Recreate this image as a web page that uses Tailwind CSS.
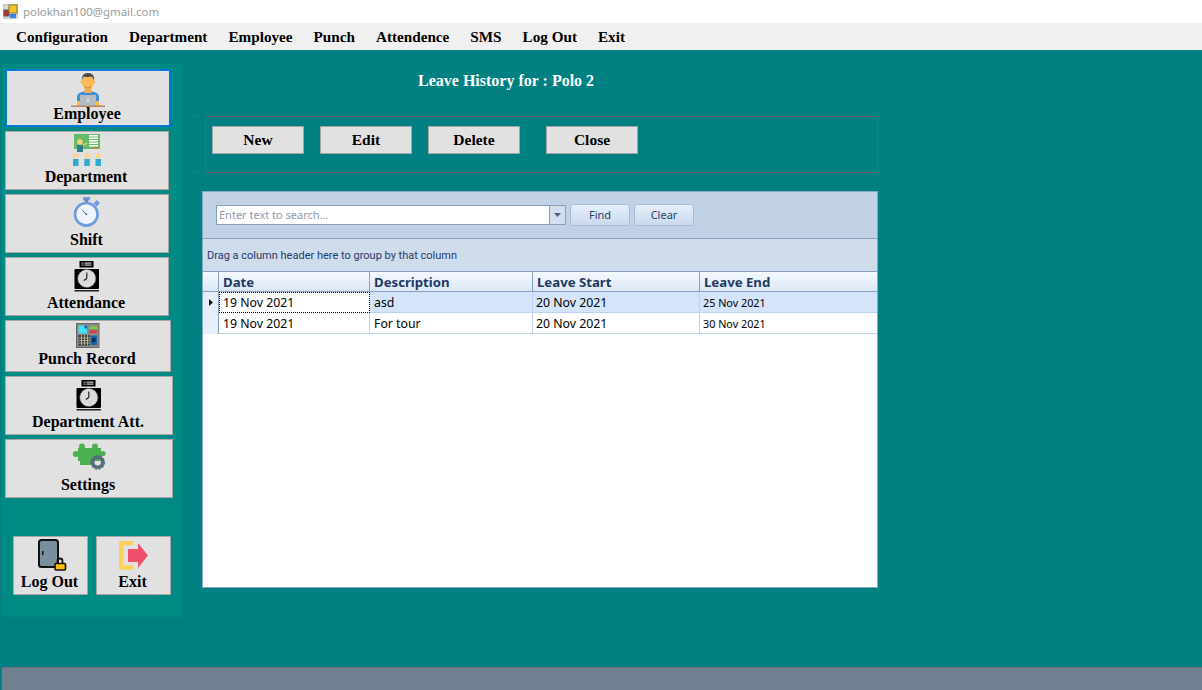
<!DOCTYPE html>
<html>
<head>
<meta charset="utf-8">
<script src="https://cdn.jsdelivr.net/npm/@tailwindcss/browser@4"></script>
</head>
<body class="m-0 h-[690px] w-[1202px] overflow-hidden bg-[#008080] flex flex-col font-['Liberation_Serif',serif] text-black">
<!-- title bar -->
<div class="h-[23px] bg-white flex items-center pl-[3px] shrink-0">
  <svg width="16" height="16" viewBox="3 3 16 16" class="mr-[4px]">
    <rect x="3.500" y="3.500" width="14" height="14" fill="#d8d8d8" stroke="#a8a8a8" stroke-width="0.500"/>
    <rect x="4" y="9" width="5" height="6" fill="#c8281e" stroke="#555" stroke-width="1"/>
    <rect x="9" y="4" width="8" height="8" fill="#f6c629" stroke="#8a7a30" stroke-width="1"/>
    <rect x="10" y="13" width="6" height="4" fill="#3f7fdc"/>
  </svg>
  <span class="font-['Noto_Sans',sans-serif] text-[11.4px] text-[#9c9c9c]">polokhan100@gmail.com</span>
</div>
<!-- menu -->
<div class="h-[27px] bg-[#f0f0f0] flex items-center pl-[16px] gap-[21px] shrink-0 text-[15.2px] font-bold leading-none pt-[1px]">
  <span>Configuration</span><span>Department</span><span>Employee</span><span>Punch</span><span>Attendence</span><span>SMS</span><span>Log Out</span><span>Exit</span>
</div>
<!-- main -->
<div class="flex-1 flex min-h-0">
  <!-- sidebar -->
  <div class="ml-[2px] mt-[14px] w-[181px] h-[553px] bg-[#008a84] pl-[3px] pt-[5px] shrink-0 flex flex-col text-[16px] font-bold leading-[18px]">
    <button class="w-[166px] h-[58px] bg-[#e1e1e1] border-2 border-[#0078d7] flex flex-col items-center">
      <svg width="34" height="35" viewBox="71 72 34 35" class="mt-[1px] block">
        <path d="M77 106v-9q0-4 5-5l3-1h6l3 1q5 1 5 5v9z" fill="#3f8fd2"/>
        <rect x="84.500" y="87" width="7" height="6" fill="#f5b04c"/>
        <circle cx="82" cy="82" r="1.500" fill="#f5b04c"/><circle cx="94" cy="82" r="1.500" fill="#f5b04c"/>
        <ellipse cx="88" cy="82.500" rx="6" ry="7" fill="#fbb957"/>
        <path d="M82 81q-1-8 6-8t6 8q-1-4-3-4.500q-4 1-7 0q-2 1-2 4.500z" fill="#4a4a4a"/>
        <path d="M85 87q3 2.500 6 0" stroke="#e0762a" fill="none"/>
        <rect x="77" y="101" width="3" height="5" fill="#fbb957"/><rect x="96" y="101" width="3" height="5" fill="#fbb957"/>
        <rect x="80" y="95" width="16" height="11" fill="#b4bcc4"/>
        <rect x="87" y="99.500" width="2" height="2" fill="#eef1f3"/>
        <rect x="71" y="105.500" width="34" height="1.500" fill="#b08a5c"/>
      </svg>
      <span class="mt-[-2px] mr-[2px]">Employee</span>
    </button>
    <button class="mt-[4px] w-[164px] h-[59px] bg-[#e1e1e1] border border-[#a6a6a6] flex flex-col items-center">
      <svg width="32" height="33" viewBox="71 134 32 33" class="block mt-[2px]">
        <rect x="74" y="134" width="26" height="15" fill="#66bb6a"/>
        <rect x="89" y="135" width="9" height="1.500" fill="#fff"/><rect x="89" y="137.500" width="9" height="1.500" fill="#fff"/><rect x="89" y="140" width="9" height="1.500" fill="#fff"/><rect x="89" y="142.500" width="9" height="1.500" fill="#fff"/><rect x="89" y="145" width="9" height="1.500" fill="#fff"/>
        <rect x="94" y="147" width="3.500" height="1.500" fill="#e0702c"/>
        <path d="M82 146l5-3" stroke="#ffd27a" stroke-width="1.200"/>
        <circle cx="80" cy="142" r="2.800" fill="#fbd17e"/>
        <rect x="77" y="145" width="6" height="7" fill="#2f7f86"/>
        <circle cx="75.700" cy="155.700" r="2.700" fill="#fbd68e"/><circle cx="87" cy="155.700" r="2.700" fill="#fbd68e"/><circle cx="98.300" cy="155.700" r="2.700" fill="#fbd68e"/>
        <rect x="73" y="159" width="5.500" height="7" fill="#2ea9cf"/><rect x="84.300" y="159" width="5.500" height="7" fill="#2ea9cf"/><rect x="95.500" y="159" width="5.500" height="7" fill="#2ea9cf"/>
      </svg>
      <span class="mt-[1px] mr-[2px]">Department</span>
    </button>
    <button class="mt-[4px] w-[164px] h-[59px] bg-[#e1e1e1] border border-[#a6a6a6] flex flex-col items-center">
      <svg width="28" height="31" viewBox="73 197 28 31" class="block mt-[2px]">
        <rect x="83" y="197" width="7" height="3.500" fill="#6f9bdc"/><rect x="85" y="199" width="3" height="4" fill="#5f8ccc"/>
        <rect x="94.500" y="201" width="4.500" height="4.500" fill="#6f9bdc" transform="rotate(45 96.700 203.300)"/>
        <circle cx="86.300" cy="214.300" r="11.300" fill="#eef4fc" stroke="#6f9bdc" stroke-width="2.600"/>
        <path d="M86.300 214.300l-4-4" stroke="#5a6a80" stroke-width="1"/><circle cx="86.300" cy="214.300" r="1" fill="#5a6a80"/>
      </svg>
      <span class="mt-[3px] mr-[1px]">Shift</span>
    </button>
    <button class="mt-[4px] w-[164px] h-[59px] bg-[#e1e1e1] border border-[#a6a6a6] flex flex-col items-center">
      <svg width="26" height="31" viewBox="74.500 261 26 31" class="block mt-[3px]">
        <rect x="80" y="261" width="14" height="6.500" fill="#000"/><rect x="82" y="262.500" width="2" height="1.200" fill="#aaa"/><rect x="85" y="262.500" width="7" height="1.200" fill="#ccc"/><rect x="82" y="264.500" width="2" height="1.200" fill="#aaa"/><rect x="85" y="264.500" width="7" height="1.200" fill="#ccc"/>
        <rect x="75" y="269" width="24.500" height="20" rx="1" fill="#000"/>
        <circle cx="87.300" cy="278.500" r="9" fill="#dcdcdc" stroke="#777" stroke-width="1" stroke-dasharray="1 1"/>
        <path d="M87.300 278.500v-6M87.300 278.500l-3 2" stroke="#111" stroke-width="1.100"/>
        <rect x="75" y="290" width="24.500" height="1.500" fill="#222"/>
      </svg>
      <span class="mt-[2px] mr-[2px]">Attendance</span>
    </button>
    <button class="mt-[4px] w-[166px] h-[52px] bg-[#e1e1e1] border border-[#a6a6a6] flex flex-col items-center">
      <svg width="24" height="25" viewBox="76.500 323.500 24 25" class="block mt-[2px]">
        <rect x="77" y="324" width="22.500" height="24" fill="#8a8a8a" stroke="#666" stroke-width="1"/>
        <rect x="79" y="326" width="8.500" height="8" fill="#41e3f6"/><path d="M85 326h2.500v3h-2.500z" fill="#1d5ea8"/>
        <rect x="90" y="327" width="7.500" height="2.500" fill="#7fd12f"/><rect x="90" y="331" width="7.500" height="2.500" fill="#e4373a"/>
        <rect x="79" y="335.500" width="11" height="10.500" fill="#3b3b30"/>
        <path d="M79 338.500h11M79 341h11M79 343.500h11M82 335.500v10.500M85 335.500v10.500M88 335.500v10.500" stroke="#c8c8a8" stroke-width="0.800"/>
        <rect x="91" y="336" width="6.500" height="9.500" fill="#1d5ea8"/><rect x="92.500" y="338.500" width="3.500" height="4" fill="#0d2a56"/>
      </svg>
      <span class="mt-[2px] mr-[2px]">Punch Record</span>
    </button>
    <button class="mt-[4px] w-[168px] h-[59px] bg-[#e1e1e1] border border-[#a6a6a6] flex flex-col items-center">
      <svg width="26" height="31" viewBox="76.500 380 26 31" class="block mt-[3px]">
        <rect x="82" y="380" width="14" height="6.500" fill="#000"/><rect x="84" y="381.500" width="2" height="1.200" fill="#aaa"/><rect x="87" y="381.500" width="7" height="1.200" fill="#ccc"/><rect x="84" y="383.500" width="2" height="1.200" fill="#aaa"/><rect x="87" y="383.500" width="7" height="1.200" fill="#ccc"/>
        <rect x="77" y="388" width="24.500" height="20" rx="1" fill="#000"/>
        <circle cx="89.300" cy="397.500" r="9" fill="#dcdcdc" stroke="#777" stroke-width="1" stroke-dasharray="1 1"/>
        <path d="M89.300 397.500v-6M89.300 397.500l-3 2" stroke="#111" stroke-width="1.100"/>
        <rect x="77" y="409" width="24.500" height="1.500" fill="#222"/>
      </svg>
      <span class="mt-[2px] mr-[2px]">Department Att.</span>
    </button>
    <button class="mt-[4px] w-[168px] h-[59px] bg-[#e1e1e1] border border-[#a6a6a6] flex flex-col items-center">
      <svg width="34" height="28" viewBox="72 444 34 28" class="block mt-[3px]">
        <g fill="#4caf50">
          <rect x="78" y="449" width="23" height="13"/>
          <rect x="80" y="461" width="12" height="5"/>
          <circle cx="82" cy="447.500" r="3"/><circle cx="95" cy="447.500" r="3"/>
          <circle cx="75.800" cy="455" r="3"/><circle cx="103" cy="454.500" r="2.600"/>
        </g>
        <circle cx="97.700" cy="463.300" r="5" fill="none" stroke="#546e7a" stroke-width="3.600"/>
        <circle cx="97.700" cy="463.300" r="6.800" fill="none" stroke="#546e7a" stroke-width="1.200" stroke-dasharray="2.200 1.600"/>
      </svg>
      <span class="mt-[5px] mr-[2px]">Settings</span>
    </button>
    <div class="mt-[38px] ml-[8px] flex gap-[8px]">
      <button class="w-[75px] h-[59px] bg-[#e1e1e1] border border-[#a6a6a6] flex flex-col items-center">
        <svg width="30" height="33" viewBox="37 538 30 33" class="block mt-[1px] ml-[3px]">
          <rect x="39" y="540" width="19" height="27" rx="2.500" fill="#78909c" stroke="#111" stroke-width="2"/>
          <rect x="42" y="551" width="1.500" height="4" fill="#111"/>
          <path d="M57.500 563v-2a2.500 2.500 0 0 1 5 0v2" fill="none" stroke="#111" stroke-width="1.800"/>
          <rect x="55" y="563.500" width="10.500" height="6.500" rx="1" fill="#ffc107" stroke="#111" stroke-width="1.600"/>
        </svg>
        <span class="mt-[2px] mr-[2px]">Log Out</span>
      </button>
      <button class="w-[75px] h-[59px] bg-[#e1e1e1] border border-[#a6a6a6] flex flex-col items-center">
        <svg width="30" height="29" viewBox="118 541 30 29" class="block mt-[4px]">
          <path d="M132 543h-12v24.500h12" fill="none" stroke="#fdd05a" stroke-width="4.500"/>
          <path d="M127 549h10v-6l10 12.500-10 12.500v-6h-10z" fill="#ef4f6c"/>
        </svg>
        <span class="mt-[3px] mr-[2px]">Exit</span>
      </button>
    </div>
  </div>
  <!-- content -->
  <div class="ml-[19px] flex-1 min-w-0">
    <div class="h-[66px] pt-[22px] pl-[216px] text-white font-bold text-[16px] leading-[18px] whitespace-pre">Leave History for : Polo 2</div>
    <div class="ml-[3px] w-[673px] h-[57px] border border-[#6e5f5f] pl-[6px] pt-[9px] flex text-[15.5px] font-bold leading-none">
      <button class="w-[92px] h-[28px] bg-[#e1e1e1] border border-[#a6a6a6]">New</button>
      <button class="ml-[16px] w-[92px] h-[28px] bg-[#e1e1e1] border border-[#a6a6a6]">Edit</button>
      <button class="ml-[16px] w-[92px] h-[28px] bg-[#e1e1e1] border border-[#a6a6a6]">Delete</button>
      <button class="ml-[26px] w-[92px] h-[28px] bg-[#e1e1e1] border border-[#a6a6a6]">Close</button>
    </div>
    <!-- grid -->
    <div class="mt-[18px] w-[676px] h-[397px] bg-white border border-[#8ba5c6] flex flex-col font-['Noto_Sans',sans-serif]">
      <div class="h-[47px] bg-[#c1d1e6] border-b border-[#87a0c0] flex items-center pl-[13px] shrink-0">
        <div class="w-[350px] h-[20px] bg-white border border-[#87a0c0] flex justify-between">
          <span class="pl-[2px] text-[11px] leading-[18px] text-[#8f99a8]">Enter text to search...</span>
          <span class="w-[16px] border-l border-[#87a0c0] bg-[#d3dfef] flex items-center justify-center">
            <svg width="7" height="4" viewBox="0 0 7 4"><path d="M0 0h7L3.500 4z" fill="#4f5f78"/></svg>
          </span>
        </div>
        <button class="ml-[4px] w-[60px] h-[22px] rounded-[3px] border border-[#a6bad6] bg-gradient-to-b from-[#e6effa] to-[#c9d9ed] text-[11px] text-[#2a3f66]">Find</button>
        <button class="ml-[4px] w-[60px] h-[22px] rounded-[3px] border border-[#a6bad6] bg-gradient-to-b from-[#e6effa] to-[#c9d9ed] text-[11px] text-[#2a3f66]">Clear</button>
      </div>
      <div class="h-[33px] bg-[#cfdcec] border-b border-[#87a0c0] pl-[4px] pt-[9px] font-['Roboto',sans-serif] text-[11px] leading-[16px] text-[#1f3a6b] shrink-0">Drag a column header here to group by that column</div>
      <div class="h-[20px] grid grid-cols-[16px_151px_163px_167px_1fr] border-b border-[#87a0c0] bg-gradient-to-b from-[#f5f8fe] to-[#dce7f6] text-[13.2px] font-bold text-[#1c3a63] leading-[21px] shrink-0">
        <div class="border-r border-[#87a0c0]"></div>
        <div class="border-r border-[#87a0c0] pl-[4px]">Date</div>
        <div class="border-r border-[#87a0c0] pl-[4px]">Description</div>
        <div class="border-r border-[#87a0c0] pl-[4px]">Leave Start</div>
        <div class="pl-[4px]">Leave End</div>
      </div>
      <div class="h-[21px] grid grid-cols-[16px_151px_163px_167px_1fr] border-b border-[#bcd3f0] bg-[#d4e5fb] text-[12.3px] leading-[21px] text-black shrink-0">
        <div class="border-r border-[#87a0c0] bg-[#e6eef9] flex items-center justify-center"><svg width="4" height="7" viewBox="0 0 4 7"><path d="M0 0l4 3.500L0 7z" fill="#111"/></svg></div>
        <div class="bg-white border border-dotted border-black pl-[3px] leading-[19px]">19 Nov 2021</div>
        <div class="border-r border-[#bcd3f0] pl-[4px]">asd</div>
        <div class="border-r border-[#bcd3f0] pl-[3px]">20 Nov 2021</div>
        <div class="pl-[3px] text-[10.8px]">25 Nov 2021</div>
      </div>
      <div class="h-[21px] grid grid-cols-[16px_151px_163px_167px_1fr] border-b border-[#bcd3f0] bg-white text-[12.3px] leading-[21px] text-black shrink-0">
        <div class="border-r border-[#87a0c0] bg-[#e6eef9]"></div>
        <div class="border-r border-[#bcd3f0] pl-[4px]">19 Nov 2021</div>
        <div class="border-r border-[#bcd3f0] pl-[4px]">For tour</div>
        <div class="border-r border-[#bcd3f0] pl-[3px]">20 Nov 2021</div>
        <div class="pl-[3px] text-[10.8px]">30 Nov 2021</div>
      </div>
    </div>
  </div>
</div>
<!-- footer -->
<div class="ml-[2px] h-[23px] bg-[#708090] border-t border-[#666f7a] shrink-0"></div>
</body>
</html>
